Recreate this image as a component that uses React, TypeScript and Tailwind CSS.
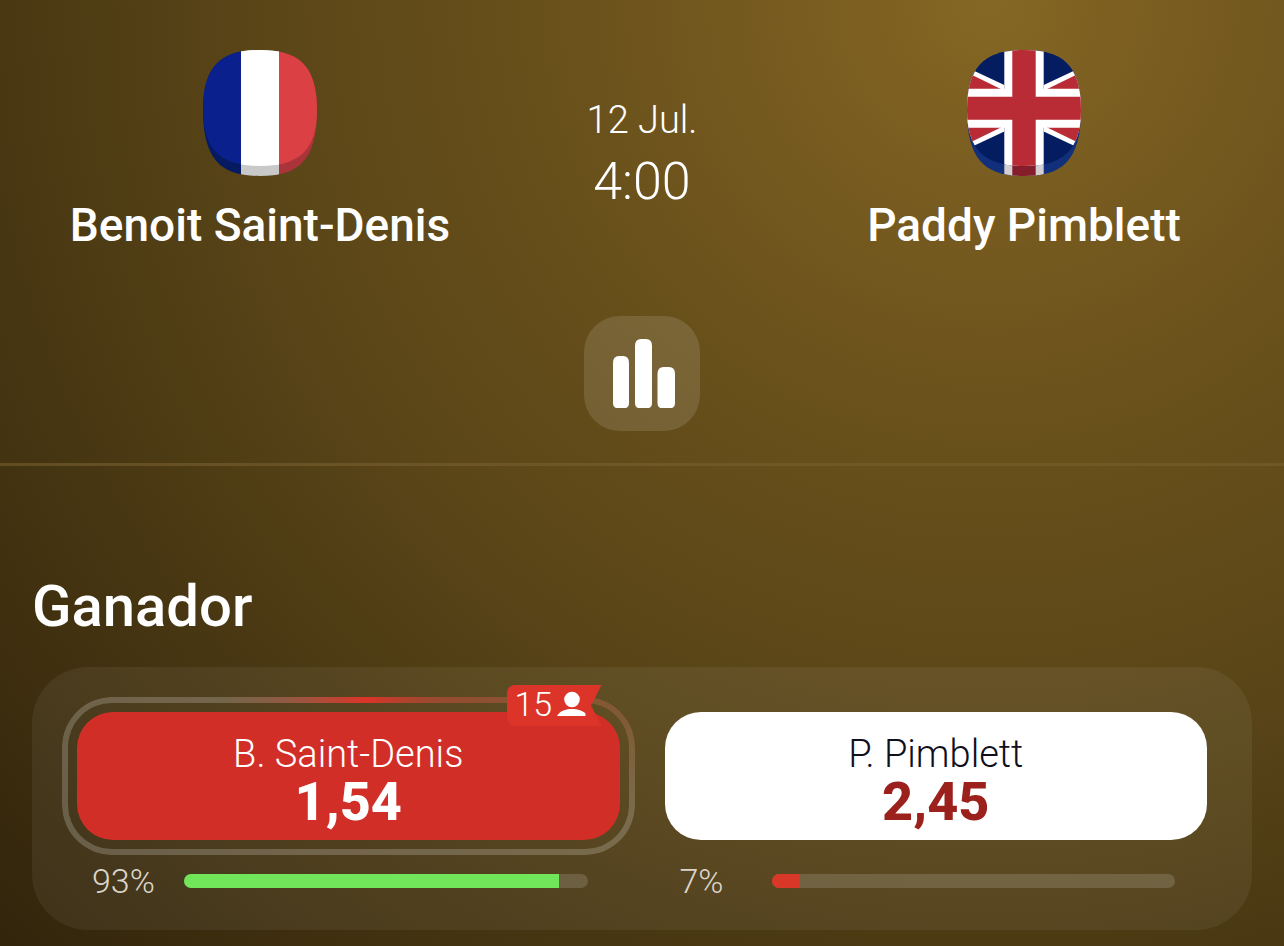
import { clsx } from "clsx";
import type { ReactNode } from "react";

const BODY = "M57 0C94 0 114 14 114 60C114 112 94 126 57 126C20 126 0 112 0 60C0 14 20 0 57 0Z";
const FACE = "M57 0C94 0 114 14 114 60C114 102 94 116 57 116C20 116 0 102 0 60C0 14 20 0 57 0Z";

/* Rounded token: the flag on its face, a darker version on the rim below */
function FlagToken({ id, label, rim, children }: { id: string; label: string; rim: ReactNode; children: ReactNode }) {
  return (
    <svg viewBox="0 0 114 126" className="h-[126px] w-[114px]" role="img" aria-label={label}>
      <defs>
        <clipPath id={`${id}-body`}>
          <path d={BODY} />
        </clipPath>
        <clipPath id={`${id}-face`}>
          <path d={FACE} />
        </clipPath>
      </defs>
      <g clipPath={`url(#${id}-body)`}>{rim}</g>
      <g clipPath={`url(#${id}-face)`}>{children}</g>
    </svg>
  );
}

function Tricolor({ colors }: { colors: string[] }) {
  return (
    <>
      <rect width="38" height="126" fill={colors[0]} />
      <rect x="38" width="38" height="126" fill={colors[1]} />
      <rect x="76" width="38" height="126" fill={colors[2]} />
    </>
  );
}

function FranceFlag() {
  return (
    <FlagToken id="fr" label="Francia" rim={<Tricolor colors={["#061a62", "#c9c9ca", "#ab343b"]} />}>
      <Tricolor colors={["#0a208c", "#ffffff", "#db4144"]} />
    </FlagToken>
  );
}

function UkFlag() {
  return (
    <FlagToken
      id="uk"
      label="Reino Unido"
      rim={
        <>
          <rect width="114" height="126" fill="#122f7b" />
          <rect x="37.3" width="39.4" height="126" fill="#d3cfd3" />
          <rect x="45.3" width="23.4" height="126" fill="#851e2b" />
        </>
      }
    >
      <rect width="114" height="126" fill="#041d61" />
      <path d="M0 17.4L37.3 35V81.4L0 99ZM114 17.4L76.7 35V81.4L114 99Z" fill="#fff" />
      <path d="M0 22.4L34.3 39.2V77.2L0 94ZM114 22.4L79.7 39.2V77.2L114 94Z" fill="#b92c35" />
      <path d="M0 38.7H37.3V0H76.7V38.7H114V77.7H76.7V126H37.3V77.7H0Z" fill="#fff" />
      <path d="M0 46.7H45.3V0H68.7V46.7H114V69.7H68.7V126H45.3V69.7H0Z" fill="#b92c35" />
    </FlagToken>
  );
}

function Fighter({ name, flag }: { name: string; flag: ReactNode }) {
  return (
    <div className="flex flex-col items-center">
      {flag}
      <h2 className="mt-[23px] text-[46px] leading-[52px] font-medium whitespace-nowrap">{name}</h2>
    </div>
  );
}

function FollowersBadge({ count }: { count: number }) {
  return (
    <span className="absolute -top-[27px] right-[18px] flex h-[41px] w-[95px] items-center rounded-l-lg bg-[#dd3429] pb-1 pl-2 text-[34px] leading-9 font-light text-white [clip-path:polygon(0_0,100%_0,89%_50%,100%_100%,0_100%)]">
      {count}
      <svg viewBox="0 0 30 26" className="ml-1 h-[26px] w-[30px]" fill="#fff" aria-hidden="true">
        <circle cx="16" cy="8.5" r="7.8" />
        <path d="M1 25C4 20 9 18 15.500 18S27 20 29.500 22.500V25Z" />
      </svg>
    </span>
  );
}

type OutcomeProps = {
  name: string;
  odds: string;
  percent: number;
  selected?: boolean;
  followers?: number;
};

function Outcome({ name, odds, percent, selected, followers }: OutcomeProps) {
  return (
    <div>
      <div className="relative">
        {selected && (
          <div className="pointer-events-none absolute -inset-[15px] rounded-[50px] bg-[conic-gradient(from_-60deg,#ffffff33_0deg,#dd3429_73deg,#b84c38aa_110deg,#c0785855_138deg,#ffffff33_158deg)] p-[6px] [mask:linear-gradient(#000_0_0)_content-box_exclude,linear-gradient(#000_0_0)]">
            <div className="size-full rounded-[44px]" />
          </div>
        )}
        <button
          type="button"
          aria-pressed={!!selected}
          className={clsx(
            "flex w-full flex-col items-center rounded-[36px] pt-[22px] pb-2.5",
            selected ? "bg-[#d22e28] text-white" : "bg-white text-[#10101c]",
          )}
        >
          <span className="text-[38px] leading-10 font-[350]">{name}</span>
          <span className={clsx("text-[54px] leading-[56px] font-extrabold", !selected && "text-[#9c211c]")}>{odds}</span>
        </button>
        {followers && <FollowersBadge count={followers} />}
      </div>
      <div className="mt-[21px] flex items-center pr-8 pl-[15px]">
        <span className="w-[92px] text-[34px] leading-10 font-light text-[#dcd6ca]">{percent}%</span>
        <div className="h-3.5 flex-1 overflow-hidden rounded-full bg-white/15">
          <div className={clsx("h-full", selected ? "bg-[#72e65a]" : "bg-[#d93829]")} style={{ width: `${percent}%` }} />
        </div>
      </div>
    </div>
  );
}

function App() {
  return (
    <main className="min-h-screen bg-[radial-gradient(circle_at_77%_0,#856724_0,#765a1f_230px,#68501b_450px,#5b4618_720px,#483712_1000px,#30230b_1400px)] pb-4 font-['Roboto',sans-serif] text-white">
      <header className="flex flex-col items-center border-b-3 border-[#785f30]/60 pt-[50px] pb-8">
        <div className="grid w-full grid-cols-[1fr_244px_1fr]">
          <Fighter name="Benoit Saint-Denis" flag={<FranceFlag />} />
          <div className="flex flex-col items-center gap-2.5 pt-12 font-[350]">
            <p className="text-[38px] leading-[44px]">12 Jul.</p>
            <p className="text-[52px] leading-[60px]">4:00</p>
          </div>
          <Fighter name="Paddy Pimblett" flag={<UkFlag />} />
        </div>
        <button
          type="button"
          aria-label="Estadísticas"
          className="mt-[65px] flex h-[115px] w-[116px] items-center justify-center rounded-[36px] bg-white/12"
        >
          <svg viewBox="0 0 68 70" className="h-[70px] w-[68px]" fill="#fff" aria-hidden="true">
            <path d="M5 24Q5 17 11 17H15Q21 17 21 24V64Q21 68 18 69H8Q5 68 5 64Z" />
            <path d="M27 7Q27 0 33 0H38Q44 0 44 7V64Q44 68 41 69H30Q27 68 27 64Z" />
            <path d="M49.500 35Q49.500 28 55.500 28H61Q67 28 67 35V64Q67 68 64 69H52.500Q49.500 68 49.500 64Z" />
          </svg>
        </button>
      </header>

      <section className="px-8 pt-[108px]">
        <h1 className="text-[58px] leading-[64px] font-medium">Ganador</h1>
        <div className="mt-[29px] grid grid-cols-2 gap-[45px] rounded-[56px] bg-white/6 px-[45px] pt-[45px] pb-[29px]">
          <Outcome name="B. Saint-Denis" odds="1,54" percent={93} selected followers={15} />
          <Outcome name="P. Pimblett" odds="2,45" percent={7} />
        </div>
      </section>
    </main>
  );
}

export default App;
